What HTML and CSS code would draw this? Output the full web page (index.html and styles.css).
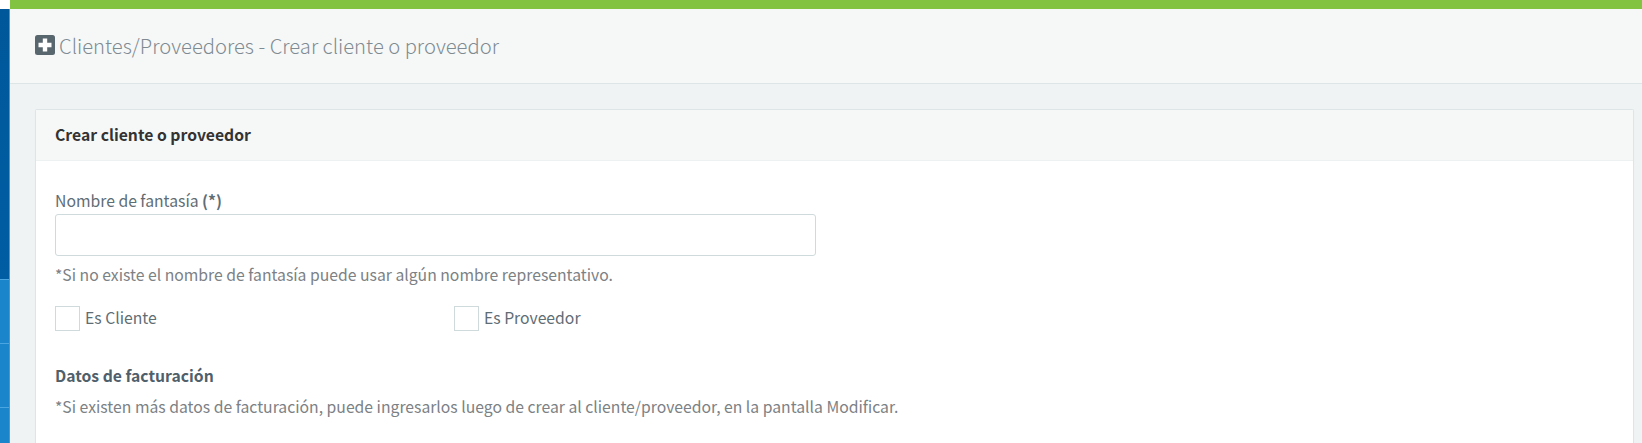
FILE: index.html
```html
<!DOCTYPE html>
<html lang="es">
<head>
<meta charset="utf-8">
<title>Crear cliente o proveedor</title>
<link rel="stylesheet" href="styles.css">
</head>
<body>
<aside class="sidebar">
  <div class="side-top"></div>
  <div class="side-active"></div>
  <div class="side-item"></div>
  <div class="side-item"></div>
  <div class="side-item side-last"></div>
</aside>
<main class="main">
  <div class="topbar"></div>
  <header class="page-head">
    <svg class="plus-icon" viewBox="0 0 20 20" aria-hidden="true"><rect width="20" height="20" rx="2.5" fill="#58666e"/><path d="M7.8 3.5h4.4v4.3h4.3v4.4h-4.3v4.3H7.8v-4.3H3.5V7.8h4.3z" fill="#fff"/></svg>
    <h1 class="page-title">Clientes/Proveedores - Crear cliente o proveedor</h1>
  </header>
  <div class="content">
    <section class="panel">
      <div class="panel-head">Crear cliente o proveedor</div>
      <form class="panel-body">
        <label class="field-label" for="nombre">Nombre de fantasía <b>(*)</b></label>
        <input class="text-input" id="nombre" type="text">
        <p class="hint hint-first">*Si no existe el nombre de fantasía puede usar algún nombre representativo.</p>
        <div class="checks">
          <label class="check"><span class="box"></span>Es Cliente</label>
          <label class="check"><span class="box"></span>Es Proveedor</label>
        </div>
        <h2 class="section-title">Datos de facturación</h2>
        <p class="hint">*Si existen más datos de facturación, puede ingresarlos luego de crear al cliente/proveedor, en la pantalla Modificar.</p>
      </form>
    </section>
  </div>
</main>
</body>
</html>
```
FILE: styles.css
```css
* { box-sizing: border-box; }
html, body { height: 100%; }
body {
  margin: 0;
  display: flex;
  height: 443px;
  overflow: hidden;
  background: #eff3f4;
  color: #5f6d75;
  font-family: "Noto Sans CJK JP", "Noto Sans", sans-serif;
  font-size: 15.74px;
}
.sidebar {
  width: 10px;
  flex: none;
  display: flex;
  flex-direction: column;
  background: #1b85cb;
  border-right: 1px solid #3a9ddc;
}
.side-top { height: 9px; background: #fff; margin-right: -1px; }
.side-active { height: 270px; background: linear-gradient(#00589a, #005da3); }
.side-item { height: 64px; border-top: 1px solid #4aa5e0; }
.side-last { flex: 1; }
.main { flex: 1; min-width: 0; display: flex; flex-direction: column; }
.topbar { height: 9px; background: #82c341; flex: none; }
.page-head {
  height: 75px;
  flex: none;
  display: flex;
  align-items: center;
  gap: 4px;
  padding: 0 0 2px 25px;
  background: #f6f8f8;
  border-bottom: 1px solid #dee5e7;
}
.plus-icon { width: 20px; height: 20px; flex: none; }
.page-title { margin: 0; font-size: 20.2px; font-weight: 300; color: #7f8b92; }
.content { flex: 1; min-height: 0; padding: 25px 8px 0 25px; }
.panel {
  height: 100%;
  background: #fff;
  border: 1px solid #dee5e7;
  border-bottom: 0;
  border-radius: 2px 2px 0 0;
  box-shadow: 0 1px 1px rgba(0, 0, 0, .05);
}
.panel-head {
  height: 51px;
  padding: 0 19px 1px;
  display: flex;
  align-items: center;
  background: #f6f8f8;
  border-bottom: 1px solid #edf1f2;
  color: #333;
  font-weight: 700;
}
.panel-body { padding: 28px 19px 0; }
.field-label { display: block; line-height: 24px; }
.field-label b { font-weight: 700; }
.text-input {
  display: block;
  width: 761px;
  height: 42px;
  margin-top: 1px;
  border: 1px solid #cfdadd;
  border-radius: 3px;
  background: #fff;
}
.hint { margin: 0; color: #7c8185; line-height: 24px; }
.hint-first { margin-top: 7px; }
.checks { display: flex; margin-top: 19px; }
.check { width: 399px; display: flex; align-items: flex-start; gap: 5px; line-height: 23px; }
.box { width: 25px; height: 25px; flex: none; border: 1px solid #cfdadd; background: #fff; }
.section-title { margin: 33px 0 0; font-size: 15.74px; font-weight: 700; line-height: 24px; color: #4f5f6b; }
.section-title + .hint { margin-top: 7px; }
```
